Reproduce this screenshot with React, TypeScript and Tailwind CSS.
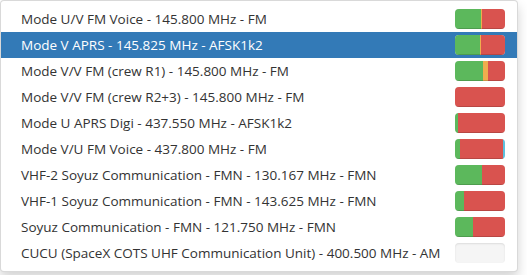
type Seg = { pct: number; color: string };

type Mode = { label: string; active?: boolean; segs: Seg[] };

const GREEN = 'bg-[#5cb85c]';
const ORANGE = 'bg-[#f0ad4e]';
const RED = 'bg-[#d9534f]';
const BLUE = 'bg-[#5bc0de]';

const modes: Mode[] = [
  { label: 'Mode U/V FM Voice - 145.800 MHz - FM', segs: [{ pct: 52, color: GREEN }, { pct: 1.5, color: ORANGE }, { pct: 46.5, color: RED }] },
  { label: 'Mode V APRS - 145.825 MHz - AFSK1k2', active: true, segs: [{ pct: 49, color: GREEN }, { pct: 3.5, color: ORANGE }, { pct: 47.5, color: RED }] },
  { label: 'Mode V/V FM (crew R1) - 145.800 MHz - FM', segs: [{ pct: 56, color: GREEN }, { pct: 10, color: ORANGE }, { pct: 34, color: RED }] },
  { label: 'Mode V/V FM (crew R2+3) - 145.800 MHz - FM', segs: [{ pct: 100, color: RED }] },
  { label: 'Mode U APRS Digi - 437.550 MHz - AFSK1k2', segs: [{ pct: 5, color: GREEN }, { pct: 1.5, color: ORANGE }, { pct: 93.5, color: RED }] },
  { label: 'Mode V/U FM Voice - 437.800 MHz - FM', segs: [{ pct: 10, color: GREEN }, { pct: 86, color: RED }, { pct: 4, color: BLUE }] },
  { label: 'VHF-2 Soyuz Communication - FMN - 130.167 MHz - FMN', segs: [{ pct: 54, color: GREEN }, { pct: 46, color: RED }] },
  { label: 'VHF-1 Soyuz Communication - FMN - 143.625 MHz - FMN', segs: [{ pct: 18, color: GREEN }, { pct: 82, color: RED }] },
  { label: 'Soyuz Communication - FMN - 121.750 MHz - FMN', segs: [{ pct: 35, color: GREEN }, { pct: 65, color: RED }] },
  { label: 'CUCU (SpaceX COTS UHF Communication Unit) - 400.500 MHz - AM', segs: [] },
];

function Bar({ segs }: { segs: Seg[] }) {
  return (
    <div className="flex h-5 w-[50px] shrink-0 overflow-hidden rounded bg-[#f5f5f5] shadow-[inset_0_1px_2px_rgba(0,0,0,0.1)]">
      {segs.map((s, i) => (
        <div
          key={i}
          className={`${s.color} h-full shadow-[inset_0_-1px_0_rgba(0,0,0,0.15)]`}
          style={{ width: `${s.pct}%` }}
        />
      ))}
    </div>
  );
}

export default function App() {
  return (
    <div className="w-[527px] h-[275px] bg-white font-['Open_Sans',sans-serif]">
      <ul className="w-[518px] rounded border border-black/15 bg-white py-[5px] shadow-[0_6px_12px_rgba(0,0,0,0.175)]">
        {modes.map((m) => (
          <li
            key={m.label}
            className={`flex h-[26px] items-center justify-between pl-5 pr-3 text-[13.5px] ${
              m.active ? 'bg-[#337ab7] text-white' : 'text-[#333]'
            }`}
          >
            <span className="whitespace-nowrap">{m.label}</span>
            <Bar segs={m.segs} />
          </li>
        ))}
      </ul>
    </div>
  );
}
